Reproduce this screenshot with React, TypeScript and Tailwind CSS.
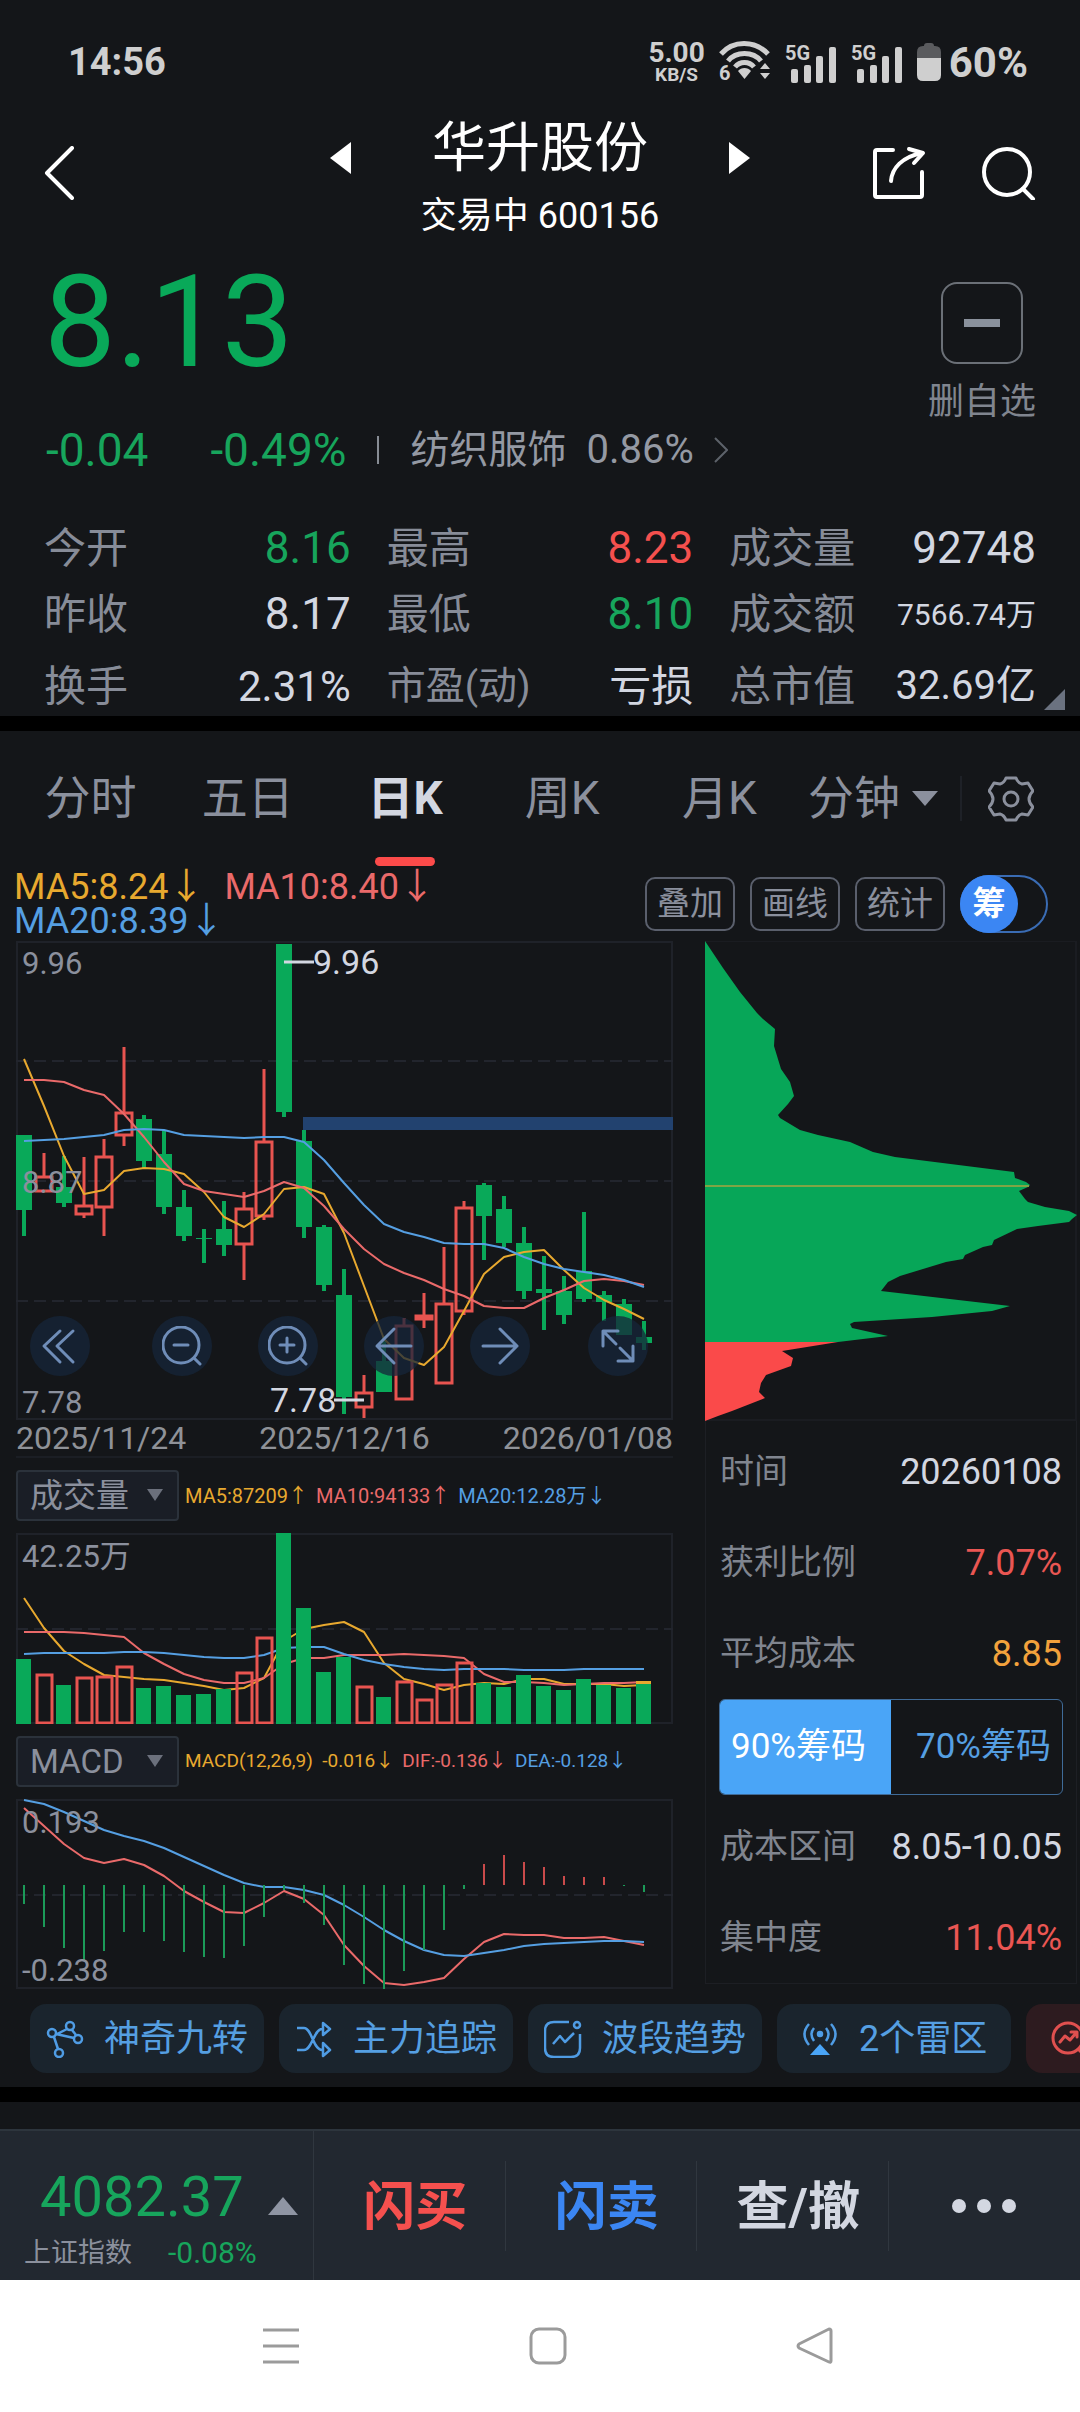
import { useState } from "react";
import type { ReactNode } from "react";

type Candle = [dir: "up" | "down", high: number, top: number, bottom: number, low: number];

const GREEN = "#09a959";
const RED = "#e85450";
const ORANGE = "#e8a92f";
const PINK = "#ea6a6a";
const BLUE = "#559fe2";

// every series shares the same 20px day step
const dayX = (i: number) => 8 + i * 20;
const toPoints = (ys: number[]) => ys.map((y, i) => `${dayX(i)},${y}`).join(" ");

const candles: Candle[] = [
    ["down", 194, 194, 269, 295],
    ["up", 212, 235, 251, 251],
    ["down", 215, 246, 262, 266],
    ["up", 216, 264, 274, 277],
    ["up", 198, 215, 267, 295],
    ["up", 106, 171, 195, 205],
    ["down", 174, 178, 220, 228],
    ["down", 189, 213, 266, 273],
    ["down", 249, 266, 295, 300],
    ["down", 288, 297, 298, 322],
    ["down", 260, 288, 304, 315],
    ["up", 251, 267, 304, 339],
    ["up", 128, 200, 276, 279],
    ["down", 3, 3, 171, 176],
    ["down", 189, 200, 286, 297],
    ["down", 284, 286, 344, 350],
    ["down", 328, 354, 456, 473],
    ["up", 434, 451, 467, 477],
    ["down", 395, 420, 451, 451],
    ["up", 377, 384, 459, 459],
    ["up", 352, 374, 379, 387],
    ["up", 306, 362, 443, 443],
    ["up", 260, 266, 371, 374],
    ["down", 242, 244, 275, 319],
    ["down", 255, 268, 302, 306],
    ["down", 286, 302, 350, 358],
    ["down", 315, 348, 352, 389],
    ["down", 335, 350, 374, 383],
    ["down", 271, 330, 358, 361],
    ["down", 350, 354, 361, 380],
    ["down", 358, 363, 394, 394],
    ["down", 380, 396, 402, 409],
];

const priceMa5 = [118, 165, 215, 253, 249, 230, 227, 228, 233, 251, 276, 286, 273, 248, 246, 253, 292, 345, 398, 417, 424, 406, 370, 333, 316, 311, 309, 329, 347, 359, 368, 378];
const priceMa10 = [139, 139, 141, 149, 154, 173, 196, 221, 243, 250, 253, 256, 250, 241, 247, 265, 288, 308, 323, 332, 339, 348, 355, 365, 367, 367, 357, 349, 340, 338, 340, 344];
const priceMa20 = [200, 199, 198, 196, 194, 189, 188, 189, 194, 195, 196, 197, 196, 196, 201, 219, 242, 264, 283, 291, 296, 302, 303, 303, 307, 316, 323, 328, 331, 334, 339, 346];

const volumes = [65, 50, 39, 47, 48, 58, 36, 38, 29, 30, 35, 52, 87, 191, 116, 52, 67, 38, 27, 43, 25, 40, 62, 41, 37, 49, 38, 34, 45, 39, 36, 43];
const volMa5 = [65, 95, 118, 131, 142, 144, 146, 147, 150, 153, 157, 155, 145, 108, 96, 92, 89, 99, 130, 146, 151, 157, 152, 150, 151, 146, 146, 151, 151, 151, 153, 152];
const volMa10 = [99, 99, 99, 100, 102, 104, 120, 131, 141, 147, 150, 150, 145, 131, 125, 125, 122, 122, 122, 121, 122, 123, 125, 141, 149, 149, 150, 152, 151, 150, 150, 149];
const volMa20 = [121, 120, 120, 120, 120, 119, 119, 120, 122, 124, 125, 125, 122, 115, 114, 114, 121, 127, 131, 134, 136, 137, 136, 136, 136, 137, 137, 137, 136, 136, 136, 136];

const macdZero = 86;
const macdBars = [105, 128, 149, 161, 152, 133, 133, 142, 153, 158, 159, 147, 118, 91, 104, 126, 166, 185, 190, 172, 151, 131, 90, 65, 56, 63, 68, 77, 78, 78, 87, 93];
const dif = [9, 27, 45, 59, 64, 60, 66, 77, 92, 103, 113, 114, 104, 92, 100, 116, 146, 167, 184, 186, 183, 179, 160, 143, 135, 136, 136, 139, 139, 138, 142, 146];
const dea = [1, 5, 13, 22, 31, 37, 42, 49, 58, 67, 76, 84, 88, 88, 91, 96, 106, 118, 131, 142, 151, 156, 157, 154, 151, 147, 145, 144, 143, 142, 142, 143];

const trapped =
    "0,0 18,27 35,51 52,72 58,78 70,88 69,105 76,128 85,141 89,155 83,163 73,174 75,177 95,189 113,194 145,201 168,211 190,216 309,231 310,237 321,241 325,244 323,246 314,250 320,258 323,261 340,266 364,270 372,274 367,278 364,281 333,285 312,288 289,299 287,304 278,306 260,314 258,318 241,321 218,328 195,335 183,341 176,350 305,365 287,370 227,376 149,381 145,383 147,387 183,395 133,401 0,401";
const profit = "0,401 133,401 77,410 88,417 86,425 61,434 56,442 54,451 60,457 27,470 13,475 0,480";

const stats = [
    { label: "今开", value: "8.16", style: "text-[44px] text-[#17a55c]" },
    { label: "最高", value: "8.23", style: "text-[44px] text-[#f5504e]" },
    { label: "成交量", value: "92748", style: "text-[44px] text-[#d3d7e1]" },
    { label: "昨收", value: "8.17", style: "text-[44px] text-[#d3d7e1]" },
    { label: "最低", value: "8.10", style: "text-[44px] text-[#17a55c]" },
    { label: "成交额", value: "7566.74万", style: "text-[30px] text-[#d3d7e1]" },
    { label: "换手", value: "2.31%", style: "text-[42px] text-[#d3d7e1]" },
    { label: "市盈(动)", value: "亏损", style: "text-[42px] text-[#d3d7e1]", small: true },
    { label: "总市值", value: "32.69亿", style: "text-[40px] text-[#d3d7e1]" },
];

const periods = ["分时", "五日", "日K", "周K", "月K"];

const Signal = () => (
    <svg width="52" height="42" viewBox="0 -4 52 42" fill="#cfcfcf">
        <text x="0" y="15" fontSize="20" fontWeight="700">5G</text>
        <rect x="6" y="24" width="7" height="14" rx="2" />
        <rect x="19" y="20" width="7" height="18" rx="2" />
        <rect x="31" y="11" width="7" height="27" rx="2" />
        <rect x="44" y="2" width="7" height="36" rx="2" />
    </svg>
);

const StatusBar = () => (
    <div className="flex h-[118px] items-center justify-between pt-1.5 pr-[52px] pl-[68px] font-bold text-[#cfcfcf]">
        <span className="text-[38px]">14:56</span>
        <div className="flex items-center gap-3.5">
            <div className="flex flex-col items-center">
                <span className="text-[28px] leading-[26px]">5.00</span>
                <span className="text-[19px] leading-[18px]">KB/S</span>
            </div>
            <svg width="52" height="46" viewBox="0 -2 52 46" fill="none" stroke="#cfcfcf" strokeWidth="5">
                <path d="M2 13C14-1 36-1 49 13" />
                <path d="M9 20C17 10 34 10 42 20" />
                <path d="M16 26C21 20 30 20 35 26" />
                <path d="M25.500 38L19 30C22 26 29 26 32 30Z" fill="#cfcfcf" stroke="none" />
                <path d="M41 28L46 22L51 28ZM41 32L46 38L51 32Z" fill="#cfcfcf" stroke="none" />
                <text x="0" y="39" fontSize="20" fontWeight="700" fill="#cfcfcf" stroke="none">6</text>
            </svg>
            <Signal />
            <Signal />
            <div className="flex items-center gap-2">
                <svg width="24" height="38" viewBox="0 0 24 38">
                    <path d="M7 3Q7 0 10 0H14Q17 0 17 3H18Q24 3 24 9V15H0V9Q0 3 6 3Z" fill="#5a5b5e" />
                    <path d="M0 15H24V32Q24 38 18 38H6Q0 38 0 32Z" fill="#cfcfcf" />
                </svg>
                <span className="text-[42px]">60%</span>
            </div>
        </div>
    </div>
);

const Header = () => (
    <header className="grid h-[120px] grid-cols-[1fr_auto_1fr] items-start px-[44px] text-white">
        <button aria-label="返回" className="mt-7 justify-self-start">
            <svg width="30" height="54" viewBox="0 0 30 54" fill="none" stroke="white" strokeWidth="4" strokeLinecap="round" strokeLinejoin="round">
                <path d="M28 2L3 27L28 52" />
            </svg>
        </button>
        <div className="flex w-[420px] items-start justify-between">
            <button aria-label="上一只" className="mt-6">
                <svg width="21" height="32" viewBox="0 0 21 32" fill="white">
                    <path d="M21 0V32L0 16Z" />
                </svg>
            </button>
            <div className="text-center">
                <h1 className="text-[54px] leading-[62px]">华升股份</h1>
                <p className="mt-3 text-[36px] leading-[48px]">交易中 600156</p>
            </div>
            <button aria-label="下一只" className="mt-6">
                <svg width="21" height="32" viewBox="0 0 21 32" fill="white">
                    <path d="M0 0V32L21 16Z" />
                </svg>
            </button>
        </div>
        <div className="mt-7 flex gap-14 justify-self-end">
            <button aria-label="分享">
                <svg width="54" height="54" viewBox="0 0 54 54" fill="none" stroke="white" strokeWidth="4" strokeLinecap="round" strokeLinejoin="round">
                    <path d="M21 4H5Q3 4 3 6V49Q3 51 5 51H48Q50 51 50 49V26" />
                    <path d="M19 35C20 22 30 11 50 7" />
                    <path d="M37 3L51 7L42 17" />
                </svg>
            </button>
            <button aria-label="搜索">
                <svg width="54" height="54" viewBox="0 0 54 54" fill="none" stroke="white" strokeWidth="4" strokeLinecap="round">
                    <circle cx="25" cy="26" r="23" />
                    <path d="M41 43L51 53" />
                </svg>
            </button>
        </div>
    </header>
);

const Quote = () => (
    <section className="relative">
        <div className="flex items-start justify-between px-[44px]">
            <div>
                <p className="mt-5 text-[128px] leading-[128px] text-[#09a959]">8.13</p>
                <div className="mt-10 flex items-center pl-0.5 leading-[48px] text-[#17a55c]">
                    <span className="text-[46px]">-0.04</span>
                    <span className="ml-[62px] text-[46px]">-0.49%</span>
                    <span className="ml-[30px] h-7 w-0.5 bg-[#878c94]" />
                    <a href="#sector" className="ml-8 flex items-center text-[39px] text-[#9499a3]">
                        纺织服饰
                        <span className="ml-5 text-[40px]">0.86%</span>
                        <svg className="ml-5" width="14" height="26" viewBox="0 0 14 26" fill="none" stroke="#5d626a" strokeWidth="2">
                            <path d="M1 1L13 13L1 25" />
                        </svg>
                    </a>
                </div>
            </div>
            <button className="mt-11 flex flex-col items-center text-[36px] text-[#80858f]">
                <span className="flex size-[82px] items-center justify-center rounded-2xl border-2 border-[#6b7077]">
                    <span className="h-2 w-9 bg-[#8a919c]" />
                </span>
                <span className="mt-4 leading-[44px]">删自选</span>
            </button>
        </div>
        <dl className="mt-11 grid grid-cols-3 grid-rows-[60px_66px_72px] items-end gap-x-9 px-[44px]">
            {stats.map((s) => (
                <div key={s.label} className="flex h-[60px] items-center justify-between whitespace-nowrap">
                    <dt className={s.small ? "text-[39px] text-[#878c98]" : "text-[42px] text-[#878c98]"}>{s.label}</dt>
                    <dd className={s.style}>{s.value}</dd>
                </div>
            ))}
        </dl>
        <svg className="absolute right-[15px] bottom-1.5" width="21" height="21" viewBox="0 0 21 21" fill="#6b7280">
            <path d="M21 0V21H0Z" />
        </svg>
    </section>
);

const PeriodTabs = () => {
    const [active, setActive] = useState("日K");

    return (
        <nav className="flex h-[135px] items-center pr-[46px] pl-3 text-[46px] text-[#8b909d]">
            {periods.map((p) => (
                <button
                    key={p}
                    onClick={() => setActive(p)}
                    className={p === active ? "relative h-full flex-1 font-bold text-[#d3d7e1]" : "relative h-full flex-1"}>
                    {p}
                    {p === active && <span className="absolute bottom-0 left-1/2 h-[9px] w-[60px] -translate-x-1/2 rounded-full bg-[#fc4b4a]" />}
                </button>
            ))}
            <button className="ml-2.5 flex items-center gap-3">
                分钟
                <svg width="26" height="15" viewBox="0 0 26 15" fill="#8b909d">
                    <path d="M0 0H26L13 15Z" />
                </svg>
            </button>
            <span className="mr-[26px] ml-[22px] h-[45px] w-0.5 bg-[#1e2127]" />
            <button aria-label="设置">
                <svg width="46" height="46" viewBox="0 0 46 46" fill="none" stroke="#8b909d" strokeWidth="3" strokeLinejoin="round">
                    <path d="M18 2H28Q30 7 34 8L40 7L45 15Q41 19 41 23T45 31L40 39L34 38Q30 39 28 44H18Q16 39 12 38L6 39L1 31Q5 27 5 23T1 15L6 7L12 8Q16 7 18 2Z" />
                    <circle cx="23" cy="23" r="7" />
                </svg>
            </button>
        </nav>
    );
};

const ChartToolbar = () => (
    <div className="flex h-[75px] items-center justify-between pr-8 pl-3.5">
        <div className="text-[36px] leading-[34px]">
            <p className="flex gap-5">
                <span className="text-[#e8a92f]">MA5:8.24↓</span>
                <span className="text-[#ea6a6a]">MA10:8.40↓</span>
            </p>
            <p className="text-[#559fe2]">MA20:8.39↓</p>
        </div>
        <div className="flex items-center gap-[15px] text-[33px] text-[#8b909d]">
            {["叠加", "画线", "统计"].map((t) => (
                <button key={t} className="h-[54px] w-[90px] rounded-[10px] border-2 border-[#5a5f6c] leading-none">
                    {t}
                </button>
            ))}
            <button role="switch" aria-checked="true" className="h-[58px] w-[88px] rounded-full border-2 border-[#3a6cb4]">
                <span className="-my-0.5 -ml-0.5 flex size-[58px] items-center justify-center rounded-full bg-[#3b86f3] font-bold text-white">筹</span>
            </button>
        </div>
    </div>
);

const Line = ({ ys, color }: { ys: number[]; color: string }) => <polyline points={toPoints(ys)} fill="none" stroke={color} strokeWidth="2" strokeLinejoin="round" />;

const Grid = ({ y }: { y: number }) => <line x1="0" x2="657" y1={y} y2={y} stroke="#22252d" strokeWidth="2" strokeDasharray="12 6" />;

const RoundButton = ({ label, className = "", children }: { label: string; className?: string; children: ReactNode }) => (
    <button aria-label={label} className={`flex size-[60px] items-center justify-center rounded-full bg-[#16253a]/75 ${className}`}>
        <svg width="40" height="40" viewBox="0 0 40 40" fill="none" stroke="#6f8db8" strokeWidth="3" strokeLinecap="round" strokeLinejoin="round">
            {children}
        </svg>
    </button>
);

const PriceChart = () => (
    <div className="relative">
        <svg viewBox="0 0 657 479" className="block w-full">
            <rect x="1" y="1" width="655" height="477" fill="none" stroke="#1f2229" strokeWidth="2" />
            <Grid y={120} />
            <Grid y={240} />
            <Grid y={360} />
            {candles.map(([dir, high, top, bottom, low], i) => {
                const x = dayX(i);
                if (dir === "down") {
                    return (
                        <g key={i} fill={GREEN}>
                            <rect x={x - 2} y={high} width="4" height={low - high} />
                            <rect x={x - 8} y={top} width="16" height={bottom - top} />
                        </g>
                    );
                }
                return (
                    <g key={i} fill="none" stroke={RED} strokeWidth="3">
                        <path d={`M${x} ${high}V${top}M${x} ${bottom}V${low}`} />
                        <rect x={x - 8} y={top + 1} width="16" height={bottom - top - 2} />
                    </g>
                );
            })}
            <Line ys={priceMa5} color={ORANGE} />
            <Line ys={priceMa10} color={PINK} />
            <Line ys={priceMa20} color={BLUE} />
            <rect x="287" y="176" width="370" height="13" fill="#22426f" />
            <path d="M268 21H298M318 459H348" stroke="#d3d7e1" strokeWidth="3" />
            <g fill="#d3d7e1" fontSize="34">
                <text x="297" y="33">9.96</text>
                <text x="254" y="471">7.78</text>
            </g>
            <g fill="#8b909d" fontSize="31">
                <text x="6" y="33">9.96</text>
                <text x="6" y="252">8.87</text>
                <text x="6" y="472">7.78</text>
            </g>
        </svg>
        <div className="absolute top-[375px] left-[14px] flex gap-[46px]">
            <RoundButton label="更早" className="mr-4">
                <path d="M20 5L4 20L20 36M33 5L17 20L33 36" />
            </RoundButton>
            <RoundButton label="缩小">
                <circle cx="19" cy="19" r="18" />
                <path d="M12 19H26M32 32L38 38" />
            </RoundButton>
            <RoundButton label="放大">
                <circle cx="19" cy="19" r="18" />
                <path d="M12 19H26M19 12V26M32 32L38 38" />
            </RoundButton>
            <RoundButton label="左移">
                <path d="M37 20H3M20 3L3 20L20 37" />
            </RoundButton>
            <RoundButton label="右移">
                <path d="M3 20H37M20 3L37 20L20 37" />
            </RoundButton>
            <RoundButton label="全屏" className="ml-3">
                <path d="M5 20V5H20M5 5L18 18M22 22L35 35M35 20V35H20" />
            </RoundButton>
        </div>
    </div>
);

const IndicatorSelect = ({ label, options }: { label: string; options: string[] }) => (
    <div className="relative shrink-0">
        <select
            aria-label={label}
            className="block h-[51px] w-[163px] appearance-none rounded-sm border-2 border-[#2b323b] bg-[#1a1e26] pl-3 text-[33px] leading-none text-[#8b909d]">
            {options.map((o) => (
                <option key={o}>{o}</option>
            ))}
        </select>
        <svg className="pointer-events-none absolute top-[19px] right-4" width="16" height="12" viewBox="0 0 16 12" fill="#6b707c">
            <path d="M0 0H16L8 12Z" />
        </svg>
    </div>
);

const VolumeChart = () => (
    <svg viewBox="0 0 657 191" className="block w-full">
        <rect x="1" y="1" width="655" height="189" fill="none" stroke="#1f2229" strokeWidth="2" />
        <Grid y={96} />
        <Line ys={volMa5} color={ORANGE} />
        <Line ys={volMa10} color={PINK} />
        <Line ys={volMa20} color={BLUE} />
        {volumes.map((v, i) =>
            candles[i][0] === "down" ? (
                <rect key={i} x={dayX(i) - 8} y={191 - v} width="15" height={v} fill={GREEN} />
            ) : (
                <rect key={i} x={dayX(i) - 7} y={192 - v} width="15" height={v - 2} fill="none" stroke={RED} strokeWidth="3" />
            )
        )}
        <rect x="620" y="148" width="15" height="3" fill={ORANGE} />
        <text x="6" y="34" fill="#8b909d" fontSize="31">42.25万</text>
    </svg>
);

const MacdChart = () => (
    <svg viewBox="0 0 657 190" className="block w-full">
        <rect x="1" y="1" width="655" height="188" fill="none" stroke="#1f2229" strokeWidth="2" />
        <Grid y={96} />
        <Line ys={dif} color={PINK} />
        <Line ys={dea} color={BLUE} />
        {macdBars.map((y, i) => (
            <line key={i} x1={dayX(i)} x2={dayX(i)} y1={macdZero} y2={y} stroke={y < macdZero ? "#c94a4a" : "#1b9a58"} strokeWidth="2" />
        ))}
        <g fill="#8b909d" fontSize="31">
            <text x="6" y="34">0.193</text>
            <text x="6" y="182">-0.238</text>
        </g>
    </svg>
);

const PanelRow = ({ label, value, color }: { label: string; value: string; color: string }) => (
    <div className="flex h-[91px] items-center justify-between px-3.5 whitespace-nowrap">
        <span className="text-[34px] text-[#80858f]">{label}</span>
        <span className={`text-[36px] ${color}`}>{value}</span>
    </div>
);

const ChipPanel = () => (
    <aside>
        <svg viewBox="0 0 372 480" className="block w-full">
            <rect x="0" y="0" width="371" height="479" fill="none" stroke="#1a1c21" strokeWidth="2" />
            <polygon points={trapped} fill="#07a658" />
            <polygon points={profit} fill="#fa4a4a" />
            <line x1="0" x2="324" y1="245" y2="245" stroke="#7fa545" strokeWidth="2" />
        </svg>
        <div className="border border-t-0 border-[#1d1f24] pt-[5px]">
            <PanelRow label="时间" value="20260108" color="text-[#d3d7e1]" />
            <PanelRow label="获利比例" value="7.07%" color="text-[#ea5653]" />
            <PanelRow label="平均成本" value="8.85" color="text-[#f2a23c]" />
            <div className="mx-[13px] mb-1.5 flex h-24 overflow-hidden rounded-md border border-[#3f6b98] text-[35px] whitespace-nowrap">
                <button className="flex-1 bg-[#4aa5f7] pr-3.5 text-center text-white">90%筹码</button>
                <button className="flex-1 pl-3.5 text-center text-[#559fe2]">70%筹码</button>
            </div>
            <PanelRow label="成本区间" value="8.05-10.05" color="text-[#d3d7e1]" />
            <PanelRow label="集中度" value="11.04%" color="text-[#ea5653]" />
        </div>
    </aside>
);

const Charts = () => (
    <section className="grid grid-cols-[657fr_372fr] gap-8 pr-[3px] pl-4">
        <div className="min-w-0">
            <PriceChart />
            <div className="flex justify-between border-b-2 border-[#1b1e24] text-[32px] leading-[36px] text-[#8f9298]">
                <span>2025/11/24</span>
                <span>2025/12/16</span>
                <span>2026/01/08</span>
            </div>
            <div className="my-3 flex items-center text-[20px] whitespace-nowrap">
                <IndicatorSelect label="副图一" options={["成交量", "成交额"]} />
                <p className="ml-1.5 flex gap-2">
                    <span className="text-[#e8a92f]">MA5:87209↑</span>
                    <span className="text-[#ea6a6a]">MA10:94133↑</span>
                    <span className="text-[#559fe2]">MA20:12.28万↓</span>
                </p>
            </div>
            <VolumeChart />
            <div className="my-3 flex items-center text-[19px] whitespace-nowrap">
                <IndicatorSelect label="副图二" options={["MACD", "KDJ"]} />
                <p className="ml-1.5 flex gap-2">
                    <span className="text-[#e8a92f]">MACD(12,26,9)&nbsp; -0.016↓</span>
                    <span className="text-[#ea6a6a]">DIF:-0.136↓</span>
                    <span className="text-[#559fe2]">DEA:-0.128↓</span>
                </p>
            </div>
            <MacdChart />
        </div>
        <ChipPanel />
    </section>
);

const tools = [
    {
        name: "神奇九转",
        padding: "px-4",
        icon: (
            <>
                <circle cx="5" cy="12" r="4" />
                <circle cx="23" cy="5" r="4" />
                <circle cx="31" cy="18" r="4" />
                <circle cx="12" cy="32" r="4" />
                <path d="M9 13L27 17M25 9L29 14M20 8L8 14M7 16L11 28" />
            </>
        ),
    },
    {
        name: "主力追踪",
        padding: "px-4",
        icon: <path d="M1 7H8C16 7 17 29 26 29H28M1 29H8C16 29 18 8 26 8H28M27 2L34 8L27 14ZM27 22L34 29L27 35Z" />,
    },
    {
        name: "波段趋势",
        padding: "px-4",
        icon: (
            <>
                <path d="M24 1H9Q0 1 0 10V27Q0 36 9 36H26Q35 36 35 27V13" />
                <path d="M8 23L15 15L20 21L29 12" />
                <circle cx="32" cy="4" r="3" />
            </>
        ),
    },
    {
        name: "2个雷区",
        padding: "px-6",
        icon: (
            <>
                <path d="M7 3Q-2 13 7 24M29 3Q38 13 29 24M12 7Q7 13 12 20M24 7Q29 13 24 20" />
                <circle cx="18" cy="13" r="2" fill="#4aa5f7" />
                <path d="M18 23L28 34H8Z" fill="#4aa5f7" stroke="none" />
            </>
        ),
    },
];

const ToolChips = () => (
    <div className="flex gap-[15px] overflow-hidden pt-[15px] pb-3.5 pl-[30px]">
        {tools.map((t) => (
            <button key={t.name} className={`flex h-[69px] shrink-0 items-center gap-5 rounded-2xl bg-[#1a242d] text-[36px] text-[#559fe2] ${t.padding}`}>
                <svg width="38" height="38" viewBox="-1 -1 38 38" fill="none" stroke="#4f9ce4" strokeWidth="2.500" strokeLinejoin="round">
                    {t.icon}
                </svg>
                {t.name}
            </button>
        ))}
        <button aria-label="诊股" className="flex h-[69px] w-[234px] shrink-0 items-center rounded-2xl bg-[#2d1b1f] px-6">
            <svg width="40" height="40" viewBox="0 0 40 40" fill="none" stroke="#e0504f" strokeWidth="3" strokeLinecap="round" strokeLinejoin="round">
                <circle cx="18" cy="19" r="15" />
                <path d="M10 23L15 17L20 21L26 14M21 13H27V18M29 31L36 38" />
            </svg>
        </button>
    </div>
);

const TradeBar = () => (
    <footer className="flex h-[151px] border-t-2 border-[#2d353d] bg-[#222830]">
        <button className="flex w-[314px] items-center justify-between border-r border-[#30373f] pr-[15px] pl-6">
            <span className="pt-8">
                <span className="block pl-4 text-left text-[56px] leading-[62px] text-[#17a55c]">4082.37</span>
                <span className="flex items-center gap-9 text-[27px] leading-[50px] whitespace-nowrap text-[#8b909d]">
                    上证指数<span className="text-[30px] text-[#17a55c]">-0.08%</span>
                </span>
            </span>
            <svg width="30" height="18" viewBox="0 0 30 18" fill="#8f95a3">
                <path d="M15 0L30 18H0Z" />
            </svg>
        </button>
        <div className="grid flex-1 grid-cols-4 items-center text-[52px] font-bold">
            <button className="h-[90px] border-r border-[#30373f] pt-1 pl-3 text-[#f5504e]">闪买</button>
            <button className="h-[90px] border-r border-[#30373f] pt-1 pl-3 text-[#3b86f3]">闪卖</button>
            <button className="h-[90px] border-r border-[#30373f] pt-1 pl-3 text-[#d3d7e1]">查/撤</button>
            <button aria-label="更多" className="flex h-[90px] items-center justify-center gap-[11px]">
                <span className="size-3.5 rounded-full bg-[#d3d7e1]" />
                <span className="size-3.5 rounded-full bg-[#d3d7e1]" />
                <span className="size-3.5 rounded-full bg-[#d3d7e1]" />
            </button>
        </div>
    </footer>
);

const SystemNav = () => (
    <div className="flex h-[132px] items-center justify-center gap-[229px] bg-white pl-4">
        <button aria-label="最近任务">
            <svg width="38" height="38" viewBox="0 0 38 38" stroke="#9b9b9b" strokeWidth="3">
                <path d="M1 3H37M1 19H37M1 35H37" />
            </svg>
        </button>
        <button aria-label="主页">
            <svg width="38" height="38" viewBox="0 0 38 38" fill="none" stroke="#9b9b9b" strokeWidth="3">
                <rect x="2" y="2" width="34" height="34" rx="8" />
            </svg>
        </button>
        <button aria-label="后退">
            <svg width="38" height="38" viewBox="0 0 38 38" fill="none" stroke="#9b9b9b" strokeWidth="3" strokeLinejoin="round">
                <path d="M33 2Q35 2 35 4V34Q35 36 33 35L3 21Q1 19 3 17Z" />
            </svg>
        </button>
    </div>
);

const App = () => {
    return (
        <div className="bg-[#141619] font-['Roboto','Noto_Sans_CJK_SC',sans-serif]">
            <StatusBar />
            <Header />
            <Quote />
            <div className="h-[15px] bg-black" />
            <PeriodTabs />
            <ChartToolbar />
            <Charts />
            <ToolChips />
            <div className="mb-[27px] h-[15px] bg-black" />
            <TradeBar />
            <SystemNav />
        </div>
    );
};

export default App;
